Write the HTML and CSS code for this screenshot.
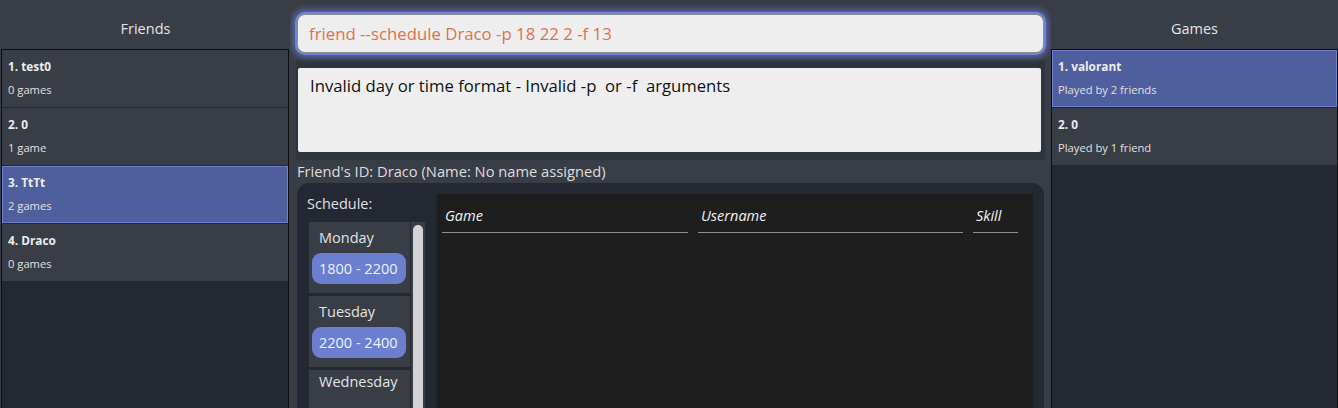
FILE: index.html
```html
<!DOCTYPE html>
<html>
<head>
<meta charset="utf-8">
<link rel="stylesheet" href="styles.css">
</head>
<body>
<div class="app">
  <aside class="side side-left">
    <div class="side-title">Friends</div>
    <div class="list">
      <div class="item"><div class="item-name">1. test0</div><div class="item-sub">0 games</div></div>
      <div class="item"><div class="item-name">2. 0</div><div class="item-sub">1 game</div></div>
      <div class="item selected"><div class="item-name">3. TtTt</div><div class="item-sub">2 games</div></div>
      <div class="item"><div class="item-name">4. Draco</div><div class="item-sub">0 games</div></div>
    </div>
  </aside>

  <main class="center">
    <div class="command">friend --schedule Draco -p 18 22 2 -f 13</div>
    <div class="result-wrap">
      <div class="result">Invalid day or time format - Invalid -p&nbsp; or -f&nbsp; arguments</div>
    </div>
    <div class="friend-id">Friend's ID: Draco (Name: No name assigned)</div>
    <div class="detail">
      <div class="schedule">
        <div class="schedule-label">Schedule:</div>
        <div class="days-wrap">
          <div class="days">
            <div class="day"><div class="day-name">Monday</div><div class="slot">1800 - 2200</div></div>
            <div class="day"><div class="day-name">Tuesday</div><div class="slot">2200 - 2400</div></div>
            <div class="day day-empty"><div class="day-name">Wednesday</div></div>
          </div>
          <div class="scrollbar"><div class="thumb"></div></div>
        </div>
      </div>
      <div class="table">
        <div class="thead">
          <div class="th th-game">Game</div>
          <div class="th th-user">Username</div>
          <div class="th th-skill">Skill</div>
        </div>
      </div>
    </div>
  </main>

  <aside class="side side-right">
    <div class="side-title">Games</div>
    <div class="list">
      <div class="item selected"><div class="item-name">1. valorant</div><div class="item-sub">Played by 2 friends</div></div>
      <div class="item"><div class="item-name">2. 0</div><div class="item-sub">Played by 1 friend</div></div>
    </div>
  </aside>
</div>
</body>
</html>
```

FILE: styles.css
```css
* { box-sizing: border-box; }
html, body { margin: 0; padding: 0; }
body {
  width: 1338px;
  height: 408px;
  overflow: hidden;
  background: #393d46;
  font-family: "Open Sans", "Noto Sans", sans-serif;
  color: #e6e6e6;
}
.app {
  display: grid;
  grid-template-columns: 290px 761px 287px;
  height: 408px;
  overflow: hidden;
}
.side { display: flex; flex-direction: column; height: 408px; overflow: hidden; }
.side-left { padding-left: 1px; }
.side-title {
  height: 49px;
  flex: none;
  display: flex;
  align-items: center;
  justify-content: center;
  font-size: 14.5px;
  color: #e4e4e4;
  padding-top: 7px;
}
.list {
  flex: 1;
  background: #232831;
  border: 1px solid #0e0f12;
  border-bottom: none;
  display: flex;
  flex-direction: column;
  gap: 1px;
}
.side-left .list { width: 288px; }
.item {
  height: 57px;
  flex: none;
  background: #393d46;
  padding: 7px 5px 0 5px;
  border: 1px solid transparent;
}
.item.selected {
  background: #4f5e9c;
  border-color: #6c80cf;
}
.item-name {
  font-size: 11.8px;
  font-weight: 700;
  color: #ececec;
  line-height: 16px;
}
.item-sub {
  font-size: 11.2px;
  color: #e0e0e0;
  line-height: 16px;
  margin-top: 8px;
}

.center {
  display: flex;
  flex-direction: column;
  padding: 0 7px;
  height: 408px;
  overflow: hidden;
}
.command {
  margin-top: 14px;
  height: 39px;
  flex: none;
  background: #eeeeee;
  border: 1px solid #8c8c8c;
  border-radius: 8px;
  box-shadow: 0 0 0 2px #6e83d9, 0 0 7px 4px rgba(107, 127, 215, 0.75);
  color: #e0704e;
  font-size: 16.8px;
  line-height: 37px;
  padding-left: 11px;
  position: relative;
  z-index: 1;
}
.result-wrap {
  flex: none;
  margin-top: 7px;
  margin-left: -1px;
  margin-right: -1px;
  background: #30343c;
  padding: 8px 4px 8px 2px;
}
.result {
  height: 84px;
  background: #eeeeee;
  color: #111111;
  font-size: 16.7px;
  padding: 6px 12px;
  line-height: 24px;
  border-radius: 2px;
}
.friend-id {
  flex: none;
  font-size: 14.7px;
  color: #dedede;
  height: 23px;
  line-height: 23px;
}
.detail {
  flex: 1;
  min-height: 0;
  background: #232833;
  border-radius: 12px 12px 0 0;
  padding: 11px 11px 0 10px;
  display: flex;
  gap: 12px;
}
.schedule { width: 118px; display: flex; flex-direction: column; }
.schedule-label {
  font-size: 14.5px;
  color: #e0e0e0;
  line-height: 20px;
  height: 28px;
  flex: none;
}
.days-wrap { display: flex; flex: 1; padding-left: 2px; gap: 1px; min-height: 0; }
.days { width: 101px; display: flex; flex-direction: column; gap: 3px; }
.day {
  height: 71px;
  flex: none;
  background: #393d46;
  padding: 5px 4px 0 3px;
}
.day.day-empty { padding-top: 1px; }
.day-name {
  font-size: 14.5px;
  color: #e2e2e2;
  padding-left: 7px;
  line-height: 22px;
  height: 26px;
}
.slot {
  height: 31px;
  background: #6a7fd0;
  border-radius: 9px;
  color: #eef0ff;
  font-size: 14.5px;
  line-height: 31px;
  padding-left: 7px;
}
.scrollbar {
  width: 14px;
  background: #393d46;
  padding: 3px 2px 0 2px;
}
.thumb {
  height: 200px;
  background: #d3d3d3;
  border-radius: 5px;
}
.table {
  flex: 1;
  background: #1e1e1e;
  padding: 0 5px;
}
.thead { display: flex; gap: 10px; padding-top: 11px; }
.th {
  font-style: italic;
  font-size: 14.5px;
  color: #f2f2f2;
  line-height: 22px;
  padding-left: 3px;
  padding-bottom: 5px;
  border-bottom: 1px solid #8e8e8e;
}
.th-game { width: 246px; }
.th-user { width: 265px; }
.th-skill { width: 45px; }
```
